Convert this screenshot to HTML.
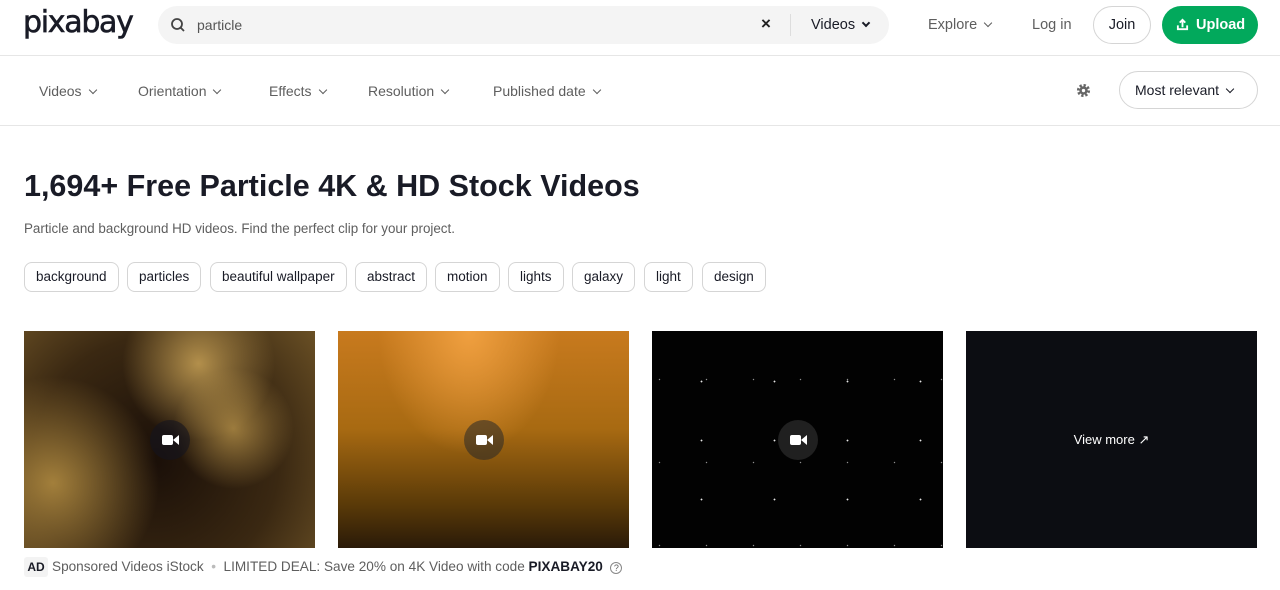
<!DOCTYPE html>
<html><head><meta charset="utf-8"><style>
*{box-sizing:border-box;margin:0;padding:0}
body{width:1280px;height:590px;overflow:hidden;background:#fff;font-family:"Liberation Sans",sans-serif;color:#191b26;position:relative}
.a{position:absolute}
.hdr{top:0;left:0;width:1280px;height:56px;border-bottom:1px solid #e6e6e6}
.sub{top:56px;left:0;width:1280px;height:70px;border-bottom:1px solid #e6e6e6}
.t{font-size:14px;color:#5e5e5e;white-space:nowrap}
.chev{display:inline-block;width:6px;height:6px;border-right:1.4px solid currentColor;border-bottom:1.4px solid currentColor;transform:rotate(45deg);margin-left:8px;position:relative;top:-3px}
.tag{position:absolute;top:262px;height:30px;border:1px solid #d5d5d5;border-radius:8px;font-size:13.5px;line-height:28px;padding:0 11px;color:#191b26;white-space:nowrap}
.img{top:331px;width:291px;height:217px;overflow:hidden}
.cam{position:absolute;left:126px;top:89px;width:40px;height:40px;border-radius:50%;background:rgba(40,40,40,.55)}
.cam:before{content:"";position:absolute;left:12px;top:15px;width:11px;height:10px;background:#fff;border-radius:2px}
.cam:after{content:"";position:absolute;left:23px;top:15px;border:5px solid transparent;border-right:6px solid #fff;border-left:0}
.stars{background-image:radial-gradient(circle,rgba(255,255,255,.9) 0.7px,transparent 1.1px),radial-gradient(circle,rgba(200,200,200,.7) 0.5px,transparent 0.9px);background-size:73px 59px,47px 83px;background-position:13px 21px,31px 7px}
</style></head><body>
<div class="a hdr"></div>
<div class="a" style="left:23px;top:5px;font-size:30px;font-weight:normal;letter-spacing:-1.3px;color:#191b26;font-family:'DejaVu Sans',sans-serif;-webkit-text-stroke:0.6px #191b26">pixabay</div>
<div class="a" style="left:158px;top:6px;width:731px;height:38px;border-radius:19px;background:#f4f4f4"></div>
<svg class="a" style="left:170px;top:17px" width="16" height="16" viewBox="0 0 16 16"><circle cx="7" cy="7" r="5" fill="none" stroke="#444" stroke-width="1.8"/><path d="M10.5 10.5L14 14" stroke="#444" stroke-width="1.8"/></svg>
<div class="a t" style="left:197px;top:17px;color:#555">particle</div>
<div class="a" style="left:761px;top:14px;font-size:17px;font-weight:bold;color:#222">×</div>
<div class="a" style="left:790px;top:14px;width:1px;height:22px;background:#ddd"></div>
<div class="a" style="left:811px;top:17px;font-size:14.5px;color:#191b26">Videos<span class="chev" style="border-width:2px"></span></div>
<div class="a t" style="left:928px;top:17px;font-size:14.5px">Explore<span class="chev"></span></div>
<div class="a t" style="left:1032px;top:17px;font-size:14.5px">Log in</div>
<div class="a" style="left:1093px;top:6px;width:58px;height:38px;border:1px solid #d5d5d5;border-radius:19px;text-align:center;line-height:37px;font-size:14.5px">Join</div>
<div class="a" style="left:1162px;top:6px;width:96px;height:38px;border-radius:19px;background:#02a95c;color:#fff;font-weight:bold;font-size:14.5px;line-height:38px;padding-left:34px">Upload</div>
<svg class="a" style="left:1176px;top:18px" width="13" height="13" viewBox="0 0 14 14"><path d="M7 10V2M4 5l3-3 3 3M2 8v4h10V8" stroke="#fff" stroke-width="2" fill="none"/></svg>
<div class="a sub"></div>
<div class="a t" style="left:39px;top:83px">Videos<span class="chev"></span></div>
<div class="a t" style="left:138px;top:83px">Orientation<span class="chev"></span></div>
<div class="a t" style="left:269px;top:83px">Effects<span class="chev"></span></div>
<div class="a t" style="left:368px;top:83px">Resolution<span class="chev"></span></div>
<div class="a t" style="left:493px;top:83px">Published date<span class="chev"></span></div>
<svg class="a" style="left:1076px;top:83px" width="15" height="15" viewBox="0 0 16 16"><circle cx="8" cy="8" r="5.5" fill="none" stroke="#666" stroke-width="3" stroke-dasharray="2.4 1.9"/><circle cx="8" cy="8" r="4.5" fill="#666"/><circle cx="8" cy="8" r="1.8" fill="#fff"/></svg>
<div class="a" style="left:1119px;top:71px;width:139px;height:38px;border:1px solid #d5d5d5;border-radius:19px;font-size:14px;line-height:37px;padding-left:15px">Most relevant<span class="chev"></span></div>
<div class="a" style="left:24px;top:169px;font-size:30.5px;font-weight:bold;white-space:nowrap">1,694+ Free Particle 4K &amp; HD Stock Videos</div>
<div class="a" style="left:24px;top:221px;font-size:13.4px;color:#5e5e5e">Particle and background HD videos. Find the perfect clip for your project.</div>
<div class="tag" style="left:24px">background</div>
<div class="tag" style="left:127px">particles</div>
<div class="tag" style="left:210px">beautiful wallpaper</div>
<div class="tag" style="left:355px">abstract</div>
<div class="tag" style="left:435px">motion</div>
<div class="tag" style="left:508px">lights</div>
<div class="tag" style="left:572px">galaxy</div>
<div class="tag" style="left:644px">light</div>
<div class="tag" style="left:702px">design</div>
<div class="a img" style="left:24px;background:radial-gradient(circle at 72% 45%,rgba(200,160,80,.7),transparent 25%),radial-gradient(circle at 10% 70%,rgba(190,150,70,.8),transparent 35%),radial-gradient(circle at 60% 15%,rgba(210,170,90,.8),transparent 30%),radial-gradient(circle at 45% 60%,#1a0f08,#3a2812 60%,#6a5025)"><div class="cam" style="background:rgba(20,20,30,.6)"></div></div>
<div class="a img" style="left:338px;background:radial-gradient(ellipse at 45% 0%,#f0a040,transparent 40%),linear-gradient(180deg,#c87a1e 0%,#a86a12 45%,#5a3a08 80%,#2a1a08 100%)"><div class="cam"></div></div>
<div class="a img stars" style="left:652px;background-color:#020202"><div class="cam" style="background:rgba(40,40,40,.8)"></div></div>
<div class="a img" style="left:966px;background:#0c0d12;color:#fff;font-size:13px;text-align:center;line-height:217px">View more ↗</div>
<div class="a" style="left:24px;top:557px;width:24px;height:20px;background:#f3f3f3;border-radius:3px;font-size:12px;font-weight:bold;text-align:center;line-height:20px">AD</div>
<div class="a t" style="left:52px;top:559px;font-size:13.6px">Sponsored Videos iStock &nbsp;<span style="color:#bbb">•</span>&nbsp; LIMITED DEAL: Save 20% on 4K Video with code <b style="color:#191b26">PIXABAY20</b> &nbsp;<span style="display:inline-block;width:12px;height:12px;border:1px solid #888;border-radius:50%;font-size:9px;line-height:10px;text-align:center">?</span></div>
</body></html>
